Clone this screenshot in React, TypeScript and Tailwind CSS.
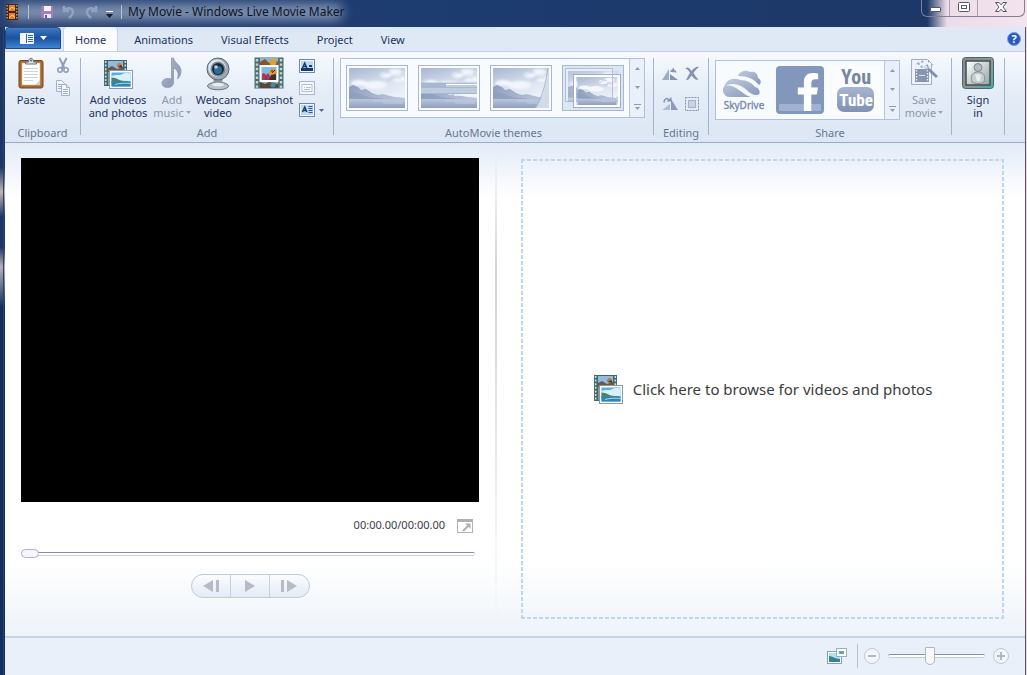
import React from 'react';
import { FaFacebookF } from 'react-icons/fa';

const tabs = ['Home', 'Animations', 'Visual Effects', 'Project', 'View'];

// Film strip with a landscape photo in front
const MediaIcon: React.FC<{ className?: string }> = ({ className }) => (
  <svg viewBox="0 0 30 30" className={className} aria-hidden="true">
    <rect x="1" y="1" width="23" height="26" fill="#41666c" />
    <path d="M2.700 2v24M22.300 2v9" stroke="#cfe0de" strokeWidth="1.600" strokeDasharray="2 1.600" />
    <rect x="5" y="2" width="15" height="10" fill="#8fbbe0" />
    <path d="M5 9l4-2 5 3 6-2v4H5z" fill="#6b5750" />
    <circle cx="16.500" cy="6.500" r="2.500" fill="#b9813f" />
    <path d="M15 8l3-2 2 3z" fill="#4a352b" />
    <rect x="5" y="13" width="2" height="13" fill="#7f9899" />
    <rect x="6.500" y="11.500" width="23" height="18" fill="#fff" stroke="#8c979f" />
    <rect x="8.500" y="13.500" width="19" height="14" fill="#58aee8" />
    <path d="M8.500 17c5-2 8 0 11-2s6 0 8-1v8h-19z" fill="#d9f0fb" />
    <path d="M8.500 18.500c5 0 8 3.500 13 3.500h3v2h-16z" fill="#4a8465" />
    <path d="M8.500 22.500h19v5h-19z" fill="#2f86b4" />
    <path d="M12 25.500c5-1.500 11-1.500 15.500-1" stroke="#9edceb" fill="none" />
  </svg>
);

const ClipboardIcon = () => (
  <svg viewBox="0 0 28 32" className="h-8 w-7" aria-hidden="true">
    <rect x="2" y="3.500" width="24" height="27.500" rx="2" fill="#a8682c" stroke="#7b471c" />
    <rect x="5" y="6" width="18" height="22" fill="#fdfdfd" stroke="#d8c5a8" strokeWidth=".6" />
    <path d="M7 11.500h14M7 14.500h14M7 17.500h14M7 20.500h14M7 23.500h9" stroke="#ccd3da" />
    <path d="M18 28l5-5v5z" fill="#c9cfd6" />
    <path d="M8.500 7V5h3c0-5 5-5 5 0h3v2z" fill="#d9e0e6" stroke="#6e7780" />
    <circle cx="14" cy="3.500" r="1" fill="#5d6670" />
  </svg>
);

const ScissorsIcon = () => (
  <svg viewBox="0 0 14 17" className="h-[17px] w-3.5" fill="none" stroke="#919eb8" aria-hidden="true">
    <path d="M3.500 1l5 10.500M10.500 1l-5 10.500" strokeWidth="2" />
    <circle cx="4" cy="13" r="2.200" strokeWidth="1.600" />
    <circle cx="10" cy="13" r="2.200" strokeWidth="1.600" />
  </svg>
);

const CopyIcon = () => (
  <svg viewBox="0 0 16 16" className="size-4" fill="#f0f4fb" stroke="#a3b0ca" aria-hidden="true">
    <path d="M1.500.5h5l3 3v8h-8z" />
    <path d="M3 4.500h4M3 6.500h4M3 8.500h3" />
    <path d="M6.500 4.500h5l3 3v8h-8z" />
    <path d="M11.500 4.500v3h3M8 9.500h5M8 11.500h5M8 13.500h5" />
  </svg>
);

const NoteIcon = () => (
  <svg viewBox="0 0 24 32" className="h-8 w-6" aria-hidden="true">
    <defs>
      <linearGradient id="note" x1="0" y1="0" x2="1" y2="1">
        <stop offset="0" stopColor="#b0b9c8" />
        <stop offset="1" stopColor="#8492ab" />
      </linearGradient>
    </defs>
    <path
      d="M11.500 1h2c1 5 7.500 7 7.500 13 0 3-1 5.500-3.500 8 1.500-5 .5-9-4-11v14.500c0 3-2.500 5-6 5S2 28.500 2 26s2.500-4.500 6-4.500c1.500 0 2.700.3 3.500.8z"
      fill="url(#note)"
      stroke="#8c99b0"
      strokeWidth=".8"
    />
  </svg>
);

const WebcamIcon = () => (
  <svg viewBox="0 0 26 34" className="h-[34px] w-[26px]" aria-hidden="true">
    <ellipse cx="13" cy="29" rx="10.500" ry="3.800" fill="#b9c2ca" stroke="#66717b" />
    <path d="M9 20h8l1 8H8z" fill="#8a959f" />
    <ellipse cx="13" cy="27.500" rx="6" ry="1.800" fill="#e8edf1" />
    <circle cx="13" cy="12" r="11" fill="#9ca8b3" stroke="#5d6973" />
    <circle cx="12" cy="11" r="8.800" fill="#dde4ea" />
    <circle cx="13" cy="12" r="7.500" fill="#7d8994" />
    <circle cx="13" cy="12" r="6" fill="#16293a" />
    <circle cx="13" cy="13" r="4" fill="#2f6c96" />
    <circle cx="11" cy="10" r="1.800" fill="#a9d3ec" />
  </svg>
);

const SnapshotIcon = () => (
  <svg viewBox="0 0 30 32" className="h-8 w-[30px]" aria-hidden="true">
    <rect x=".5" y=".5" width="29" height="31" fill="#4a6d70" />
    <path d="M3 2v29M27 2v29" stroke="#c5d5d3" strokeWidth="2.400" strokeDasharray="2.400 2" />
    <rect x="6" y="1" width="18" height="30" fill="#86b6d6" />
    <path d="M6 5l5-3 4 4 4-4 5 3v4H6z" fill="#8f5228" />
    <circle cx="19" cy="5" r="3.500" fill="#d9a338" />
    <path d="M6 25l5 2 4-2 9 2v4H6z" fill="#5b4733" />
    <circle cx="19" cy="28" r="2.500" fill="#3d8ab0" />
    <rect x="6.500" y="9" width="17" height="15" fill="#79bde6" stroke="#fff" strokeWidth="2" />
    <path d="M8 23v-6l2-1 2 2 2-2 2 3v4z" fill="#c22f4f" />
    <path d="M11 23v-4l2 1v3z" fill="#30539c" />
    <circle cx="19" cy="15" r="3.500" fill="#dd9a28" />
    <path d="M15 23l2-5 5-1v6z" fill="#4b2b1b" />
    <path d="M18 16l3-3M17 14h2" stroke="#382218" />
  </svg>
);

const CaptionIcon: React.FC<{ kind: 'title' | 'caption' | 'credits' }> = ({ kind }) => (
  <svg viewBox="0 0 16 14" className="h-3.5 w-4" aria-hidden="true">
    <rect x=".5" y=".5" width="15" height="13" fill="#f4f8fc" stroke={kind === 'caption' ? '#abb7cf' : '#7088ad'} />
    {kind === 'caption' ? (
      <path d="M3 3.500h10v7H3zM3 3.500h10M5 6.500h1M7 6.500h5M5 8.500h6" fill="#fff" stroke="#b3bed2" />
    ) : (
      <>
        <rect x="2" y="2" width="12" height="10" fill="#b9dcf4" />
        {kind === 'title' && <path d="M2 9h12v3H2z" fill="#163a70" />}
        <path d="M3.500 9l2.200-5 2.200 5M4.500 7.500h2.500" fill="none" stroke="#163a70" strokeWidth="1.400" />
        {kind === 'title' ? (
          <path d="M10 7h3" stroke="#163a70" strokeWidth="2" />
        ) : (
          <path d="M9.500 3.500h4M9.500 5.500h4M9.500 7.500h4M9.500 9.500h4" stroke="#315b99" />
        )}
      </>
    )}
  </svg>
);

const ThemeDefs = () => (
  <svg className="absolute size-0" aria-hidden="true">
    <defs>
      <linearGradient id="themeSky" x1="0" y1="0" x2=".4" y2="1">
        <stop offset="0" stopColor="#a9b6d2" />
        <stop offset=".6" stopColor="#dfe6f3" />
        <stop offset="1" stopColor="#f0f4fb" />
      </linearGradient>
      <linearGradient id="themeHill" x1="0" y1="0" x2="1" y2=".5">
        <stop offset="0" stopColor="#8e9dbd" />
        <stop offset="1" stopColor="#b7c3da" />
      </linearGradient>
      <linearGradient id="themeSea" x1="0" y1="0" x2="0" y2="1">
        <stop offset="0" stopColor="#b9c5dc" />
        <stop offset="1" stopColor="#8f9fc0" />
      </linearGradient>
      <filter id="themeSoft">
        <feGaussianBlur stdDeviation="1" />
      </filter>
    </defs>
  </svg>
);

// Washed-out landscape shared by all of the theme thumbnails
const Landscape = () => (
  <>
    <rect width="56" height="40" fill="url(#themeSky)" />
    <g fill="#f3f6fc" filter="url(#themeSoft)">
      <ellipse cx="10" cy="15" rx="8" ry="3" />
      <ellipse cx="26" cy="17" rx="12" ry="4" />
      <ellipse cx="37" cy="7" rx="6" ry="3" />
      <ellipse cx="46" cy="4" rx="7" ry="3" />
      <ellipse cx="50" cy="11" rx="7" ry="3" />
    </g>
    <path d="M32 8q4-5 10-3M38 13q6-5 14-3" fill="none" stroke="#b4c0d8" filter="url(#themeSoft)" />
    <path d="M0 19l4-2 5 2 3 3 5-1 6 4 6 2 5-1 7 2 5 1 10 1v4H0z" fill="url(#themeHill)" />
    <path d="M0 23l8 2 12 4 16 2H0z" fill="#8999ba" opacity=".6" />
    <path d="M0 31h56v9H0z" fill="url(#themeSea)" />
    <path d="M24 33h32M34 35h20" stroke="#d4dcea" strokeWidth=".6" />
  </>
);

const ThemeThumb: React.FC<{ kind: number }> = ({ kind }) => (
  <svg viewBox="0 0 62 46" className="h-[46px] w-[62px]" aria-hidden="true">
    <rect x=".5" y=".5" width="61" height="45" fill={kind === 3 ? '#dce5f2' : '#fafcff'} stroke="#a9b7d1" />
    {kind < 3 && (
      <svg x="3" y="3" width="56" height="40" viewBox="0 0 56 40">
        <Landscape />
      </svg>
    )}
    {kind === 1 && (
      <>
        <path d="M3 18h56v11H3z" fill="#bfcbdf" />
        <path d="M3 18h25v5H3z" fill="#a9b7d2" />
        <path d="M28 19.500h31" stroke="#fff" />
        <path d="M3 18h56M28 22.500h31M3 28.500h56" stroke="#a3b0ca" strokeWidth=".8" />
        <path d="M36 30h23" stroke="#f3f6fb" strokeWidth="1.500" />
      </>
    )}
    {kind === 2 && (
      <>
        <path d="M59 3c-2 14-5 28-13 40h13z" fill="#d2dbeb" />
        <path d="M58 3c-2 14-5 28-13 40" fill="none" stroke="#a9b6d0" />
      </>
    )}
    {kind === 3 && (
      <>
        <rect x="3.500" y="3.500" width="47" height="33" fill="#e6edf7" stroke="#b3c0d8" />
        <svg x="6" y="6" width="50" height="31" viewBox="0 0 56 36" preserveAspectRatio="none" opacity=".75">
          <Landscape />
        </svg>
        <rect x="11.500" y="9.500" width="47" height="33" fill="none" stroke="#9daccb" />
        <rect x="13" y="11" width="44" height="30" fill="none" stroke="#fff" strokeWidth="2" />
        <svg x="14" y="12" width="42" height="28" viewBox="0 0 56 40">
          <Landscape />
        </svg>
        <path d="M50.500 4v33" stroke="#b3c0d8" />
      </>
    )}
  </svg>
);

const editIcons = [
  {
    name: 'Rotate left',
    art: (
      <>
        <path d="M0 14h7V3z" fill="#a0acc3" />
        <path d="M8 14h8L8 8z" fill="#8593b0" />
        <path d="M9 5.500c2-2 4-1 5 1" fill="none" stroke="#8593b0" strokeWidth="1.500" />
        <path d="M8 5.500l4-4v5z" fill="#8593b0" />
      </>
    ),
  },
  {
    name: 'Remove',
    art: (
      <path
        d="M1 2.500c3-2 4.500-.5 6.500 2.500C10 2 12.500 0 15 1c-2 1.500-4 3.500-5.500 6 1.500 2.500 3 4.500 5 6.500-3 1-4.500-1-7-4-2 3-3 5-5.500 4.500C3.500 11 4.500 9 6 7 4.500 4.500 3.500 3 1 2.500z"
        fill="#8593b0"
      />
    ),
  },
  {
    name: 'Rotate right',
    art: (
      <>
        <path d="M9 14h7L9 3z" fill="#8f9cb7" />
        <path d="M0 14h8V8z" fill="#b0bbcf" />
        <path d="M2 6.500c0-4 3-5 5-2.500" fill="none" stroke="#8593b0" strokeWidth="1.500" />
        <path d="M4.500 5.500h5V1z" fill="#8593b0" />
      </>
    ),
  },
  {
    name: 'Select all',
    art: (
      <>
        <rect x="1.500" y="1.500" width="13" height="13" fill="none" stroke="#8492ac" strokeDasharray="2 1" />
        <rect x="4.500" y="4.500" width="7" height="7" fill="#c9d3e4" stroke="#a5b1c9" />
      </>
    ),
  },
];

const SkyDriveLogo = () => (
  <svg viewBox="0 0 48 48" className="size-12" role="img" aria-label="SkyDrive">
    <defs>
      <linearGradient id="cloud" x1="0" y1="0" x2="1" y2="1">
        <stop offset="0" stopColor="#c2cde0" />
        <stop offset="1" stopColor="#8496b7" />
      </linearGradient>
    </defs>
    <path d="M18 10c1-4 7-7 12-4 5-1 8 2 8 6 3 1 4 5 1 7-5-6-11-9-21-9z" fill="url(#cloud)" />
    <path d="M10 31c-7 0-9-8-5-12 1-5 9-8 15-5 7 0 12 3 15 7 5 0 7 9 1 10z" fill="url(#cloud)" />
    <path d="M5 20c11-5 18 1 24 6 5 4 10 4 14-1-3 7-10 8-17 4C18 24 13 18 5 20z" fill="#f4f7fc" />
    <text x="24" y="43" textAnchor="middle" fontSize="10" fill="#7486aa" stroke="#7486aa" strokeWidth=".3">SkyDrive</text>
  </svg>
);

const YouTubeLogo = () => (
  <svg viewBox="0 0 48 48" className="size-12" role="img" aria-label="YouTube" fontFamily="'Roboto Condensed', 'Liberation Sans Narrow', Roboto, sans-serif">
    <defs>
      <linearGradient id="tube" x1="0" y1="0" x2="0" y2="1">
        <stop offset="0" stopColor="#a8b5cf" />
        <stop offset="1" stopColor="#7f92b5" />
      </linearGradient>
    </defs>
    <rect width="48" height="48" fill="#fbfcfe" />
    <text x="24" y="18" textAnchor="middle" fontSize="20" fontWeight="700" fill="#75879f">You</text>
    <rect x="5" y="21" width="37" height="25" rx="7" fill="url(#tube)" />
    <text x="24" y="40" textAnchor="middle" fontSize="17" fontWeight="700" fill="#fff">Tube</text>
  </svg>
);

const SaveIcon = () => (
  <svg viewBox="0 0 28 30" className="h-[30px] w-7" aria-hidden="true">
    <path d="M1.500 2.500h16l4 4v21h-20z" fill="#eef3fa" stroke="#a0aec8" />
    <rect x="5" y="12" width="14" height="13" fill="#8795b1" />
    <path d="M6.500 13v12M17.500 13v12" stroke="#e7edf7" strokeDasharray="1.500 1.500" strokeWidth="1.300" />
    <path d="M9 18.500h6" stroke="#dde5f1" />
    <path d="M6 7l3-2 1 3zM12 3l2 2-3 1zM15 9l3-2 0 3zM10 10l2-2 1 3zM18 3l2 1-2 2z" fill="#97a5c0" />
    <path d="M15 9l12 11" stroke="#8090ac" strokeWidth="3" />
    <path d="M15 9l3 2.800" stroke="#e6ecf6" strokeWidth="2" />
    <path d="M17 12l2-3M21 10l2-3" stroke="#a9b5cb" />
  </svg>
);

const SignInIcon = () => (
  <svg viewBox="0 0 32 32" className="size-8" aria-hidden="true">
    <defs>
      <linearGradient id="frame" x1="0" y1="0" x2="1" y2="1">
        <stop offset="0" stopColor="#84898c" />
        <stop offset=".6" stopColor="#8d9899" />
        <stop offset="1" stopColor="#39b4a6" />
      </linearGradient>
      <linearGradient id="portrait" x1="0" y1="0" x2="1" y2="1">
        <stop offset="0" stopColor="#fff" />
        <stop offset="1" stopColor="#92a5a5" />
      </linearGradient>
    </defs>
    <rect x=".5" y=".5" width="31" height="31" rx="3" fill="url(#frame)" stroke="#52636a" />
    <rect x="4" y="4" width="24" height="24" fill="url(#portrait)" stroke="#474e50" strokeWidth="1.500" />
    <circle cx="16" cy="10.500" r="4" fill="#b4bdbf" stroke="#78888b" />
    <path d="M10 25c-2-7 1-10 6-10s8 3 6 10c-3 2-9 2-12 0z" fill="#c6cdcf" stroke="#819195" />
    <path d="M13 18c1-1 4-1 6 0l-1 6h-3z" fill="#e9eeee" />
  </svg>
);

const Caret: React.FC<{ className?: string }> = ({ className = 'text-[#536a91]' }) => (
  <svg viewBox="0 0 5 3" className={`inline-block h-[3px] w-[5px] ${className}`} aria-hidden="true">
    <path d="M0 0h5L2.500 3z" fill="currentColor" />
  </svg>
);

const Separator = () => <span className="mt-1.5 h-[77px] w-px shrink-0 bg-[#a5b4ca]" />;

const Group: React.FC<{ label?: string; className: string; children: React.ReactNode }> = ({ label, className, children }) => (
  <section aria-label={label} className={`flex shrink-0 flex-col ${className}`}>
    <div className="flex flex-1 items-start">{children}</div>
    <span className="h-[17px] text-center leading-[15px] text-[#68778f]">{label}</span>
  </section>
);

interface BigButtonProps {
  icon: React.ReactNode;
  lines: string[];
  className: string;
  muted?: boolean;
  menu?: boolean;
}

const BigButton: React.FC<BigButtonProps> = ({ icon, lines, className, muted, menu }) => (
  <button className={`flex shrink-0 flex-col items-center pt-[5px] leading-[13px] whitespace-nowrap ${muted ? 'text-[#8e97a8]' : 'text-[#1e3260]'} ${className}`}>
    <span className="flex h-9 items-start justify-center">{icon}</span>
    {lines.map((line, i) => (
      <span key={line} className="flex items-center gap-0.5">
        {line}
        {menu && i === lines.length - 1 && <Caret className="text-[#97a2b5]" />}
      </span>
    ))}
  </button>
);

// Up / down / expand column at the end of a gallery
const GalleryScroll = () => (
  <div className="flex w-[15px] flex-col border-l border-[#b9c6da] bg-[#e9f0f9] text-[#8c9bb5]">
    <button aria-label="Scroll up" className="flex flex-1 items-center justify-center">
      <Caret className="rotate-180" />
    </button>
    <button aria-label="Scroll down" className="flex flex-1 items-center justify-center">
      <Caret className="" />
    </button>
    <button aria-label="More" className="flex flex-1 flex-col items-center justify-center gap-0.5">
      <span className="h-px w-[7px] bg-current" />
      <Caret className="" />
    </button>
  </div>
);

const TitleBar = () => (
  <header className="relative flex h-[27px] items-start bg-linear-to-r from-[#263f6e] via-[#1d3c70] via-40% to-[#1b3766] text-[12px] text-[#0c1424]">
    <div className="absolute inset-y-0 right-0 w-[100px] bg-linear-to-r from-transparent via-[#eddcea] via-20% to-[#f3e4ee]" />
    <div className="absolute top-1 left-2 h-4 w-[335px] rounded-full bg-[#8395b3] blur-[6px]" />
    <div className="relative flex h-6 items-center pl-1.5">
      <svg viewBox="0 0 12 16" className="h-4 w-3" aria-hidden="true">
        <rect width="12" height="16" fill="#3b2a24" />
        <path d="M1.200 1v15M10.800 1v15" stroke="#dcb589" strokeDasharray="1.500 1.500" strokeWidth="1.200" />
        <path d="M3 1h6v6H3zM3 9h6v6H3z" fill="#f07b25" />
        <path d="M3 6l3-3 3 2M3 14l3-3 3 2" stroke="#ffd568" fill="none" />
      </svg>
      <span className="ml-2.5 h-3.5 w-px bg-[#b4c0d4]" />
      <button aria-label="Save" className="ml-3">
        <svg viewBox="0 0 13 12" className="h-3 w-[13px]" aria-hidden="true">
          <path d="M0 0h12v12H1L0 11z" fill="#a07fbe" />
          <path d="M3 0h7v5H3z" fill="#f7effc" />
          <path d="M3 8h7v4H3z" fill="#efe5f6" />
          <path d="M4 9h2v3H4z" fill="#75569b" />
        </svg>
      </button>
      <button aria-label="Undo" className="ml-2">
        <svg viewBox="0 0 14 14" className="size-3.5" fill="none" stroke="#8fa2c2" strokeWidth="2.500" aria-hidden="true">
          <path d="M2 1v5h5M2.500 5.500C5 2 11 3 11 7c0 3-2 4-4 6" />
        </svg>
      </button>
      <button aria-label="Redo" className="ml-2">
        <svg viewBox="0 0 14 14" className="size-3.5" fill="none" stroke="#8fa2c2" strokeWidth="2.500" aria-hidden="true">
          <path d="M12 1v5H7M11.500 5.500C9 2 3 3 3 7c0 3 2 4 4 6" />
        </svg>
      </button>
      <button aria-label="Customize Quick Access Toolbar" className="ml-2 flex flex-col items-center gap-0.5 pt-1">
        <span className="h-px w-[7px] bg-white" />
        <svg viewBox="0 0 7 4" className="h-1 w-[7px]" aria-hidden="true">
          <path d="M0 0h7L3.500 4z" fill="#111a2c" />
        </svg>
      </button>
      <span className="ml-2 h-3.5 w-px bg-[#b4c0d4]" />
      <h1 className="ml-1.5 whitespace-nowrap">My Movie - Windows Live Movie Maker</h1>
    </div>
    <div className="relative mr-0.5 ml-auto flex h-[17px] rounded-b-md border border-t-0 border-[#857f92] text-[#535764]">
      <button aria-label="Minimize" className="flex w-7 items-start justify-center border-r border-[#aaa2b2] pt-[7px]">
        <span className="h-[5px] w-[11px] rounded-[1px] border border-current bg-white" />
      </button>
      <button aria-label="Maximize" className="flex w-7 items-start justify-center border-r border-[#aaa2b2] pt-0.5">
        <svg viewBox="0 0 12 10" className="h-2.5 w-3" fill="#fff" stroke="currentColor" aria-hidden="true">
          <rect x=".5" y=".5" width="11" height="9" rx="1" />
          <rect x="3.500" y="3.500" width="5" height="3" />
        </svg>
      </button>
      <button aria-label="Close" className="flex w-[46px] items-start justify-center pt-0.5">
        <svg viewBox="0 0 12 10" className="h-2.5 w-3" fill="#fff" stroke="currentColor" aria-hidden="true">
          <path d="M.5.500h3.500L6 2.800 8 .5h3.500L8 5l3.500 4.500H8L6 7.200 4 9.500H.5L4 5z" />
        </svg>
      </button>
    </div>
  </header>
);

const TabBar = () => (
  <nav className="flex h-6 items-end bg-[#dfe9f5] text-[#1e3260]">
    <button aria-label="File menu" className="flex h-[22px] w-14 items-center justify-center gap-1.5 self-start rounded-t-sm border border-[#1a4a93] bg-linear-to-b from-[#3e79c1] via-[#1c52a2] via-50% to-[#3d85d2]">
      <svg viewBox="0 0 14 11" className="h-[11px] w-3.5" aria-hidden="true">
        <rect width="14" height="11" rx="1" fill="#f3f8fd" />
        <path d="M6.500 1v9" stroke="#2962ad" />
        <path d="M8 2.500h5M8 4.500h5M8 6.500h5M8 8.500h5" stroke="#2962ad" />
      </svg>
      <svg viewBox="0 0 7 4" className="h-1 w-[7px]" aria-hidden="true">
        <path d="M0 0h7L3.500 4z" fill="#fff" />
      </svg>
    </button>
    <div role="tablist" className="ml-0.5 flex h-full gap-1">
      {tabs.map((tab) => (
        <button
          key={tab}
          role="tab"
          aria-selected={tab === 'Home'}
          className={`border-x px-[11px] pt-0.5 whitespace-nowrap ${tab === 'Home' ? 'rounded-t-sm border-[#c3d2e6] bg-[#fafcfe]' : 'border-transparent'}`}
        >
          {tab}
        </button>
      ))}
    </div>
    <button aria-label="Help" className="mr-1 ml-auto self-center">
      <svg viewBox="0 0 14 14" className="size-3.5" aria-hidden="true">
        <circle cx="7" cy="7" r="6.500" fill="#2559c4" stroke="#7d9ed8" />
        <text x="7" y="11" textAnchor="middle" fontSize="11" fontWeight="700" fill="#fff">?</text>
      </svg>
    </button>
  </nav>
);

const Ribbon = () => (
  <div className="relative flex h-[92px] overflow-hidden border-t border-b border-t-[#c3cfe0] border-b-[#9aadc6] bg-linear-to-b from-[#f6fafe] via-[#e4ecf7] via-45% to-[#dce6f4]">
    <ThemeDefs />
    <Group label="Clipboard" className="w-[75px]">
      <BigButton className="ml-2 w-9" icon={<ClipboardIcon />} lines={['Paste']} />
      <div className="ml-1.5 flex flex-col items-center gap-1.5 pt-[5px]">
        <button aria-label="Cut">
          <ScissorsIcon />
        </button>
        <button aria-label="Copy">
          <CopyIcon />
        </button>
      </div>
    </Group>
    <Separator />
    <Group label="Add" className="w-[252px]">
      <BigButton className="ml-[7px] w-[60px]" icon={<MediaIcon className="mt-0.5 size-[30px]" />} lines={['Add videos', 'and photos']} />
      <BigButton className="ml-px w-[46px]" icon={<NoteIcon />} lines={['Add', 'music']} muted menu />
      <BigButton className="w-[46px]" icon={<WebcamIcon />} lines={['Webcam', 'video']} />
      <BigButton className="w-14" icon={<SnapshotIcon />} lines={['Snapshot']} />
      <div className="ml-0.5 flex flex-col items-start gap-2 pt-[7px]">
        <button aria-label="Title">
          <CaptionIcon kind="title" />
        </button>
        <button aria-label="Caption">
          <CaptionIcon kind="caption" />
        </button>
        <button aria-label="Credits" className="flex items-center gap-1">
          <CaptionIcon kind="credits" />
          <Caret />
        </button>
      </div>
    </Group>
    <Separator />
    <Group label="AutoMovie themes" className="w-[319px]">
      <div className="mt-1.5 ml-1.5 flex h-[60px] border border-[#b2c0d7] bg-[#f8fbfe]">
        <div className="flex items-center gap-2.5 px-[5px]">
          {['Default', 'Contemporary', 'Cinematic', 'Fade'].map((theme, i) => (
            <button key={theme} aria-label={theme}>
              <ThemeThumb kind={i} />
            </button>
          ))}
        </div>
        <GalleryScroll />
      </div>
    </Group>
    <Separator />
    <Group label="Editing" className="w-[54px]">
      <div className="grid grid-cols-2 gap-x-1.5 gap-y-3.5 pt-3.5 pl-2">
        {editIcons.map(({ name, art }) => (
          <button key={name} aria-label={name}>
            <svg viewBox="0 0 16 16" className="size-4" aria-hidden="true">
              {art}
            </svg>
          </button>
        ))}
      </div>
    </Group>
    <Separator />
    <Group label="Share" className="w-[242px]">
      <div className="mt-2 ml-1.5 flex h-[60px] border border-[#b2c0d7] bg-[#f8fbfe]">
        <div className="flex items-center gap-2 px-1">
          <button>
            <SkyDriveLogo />
          </button>
          <button aria-label="Facebook" className="relative flex size-12 items-end justify-center rounded-sm bg-[#8397bc] pb-[3px]">
            <span className="absolute inset-x-[3px] bottom-[3px] h-[7px] bg-[#a1b1cf]" />
            <FaFacebookF className="relative ml-4 size-[38px] text-white" />
          </button>
          <button>
            <YouTubeLogo />
          </button>
        </div>
        <GalleryScroll />
      </div>
      <BigButton className="w-12" icon={<SaveIcon />} lines={['Save', 'movie']} muted menu />
    </Group>
    <Separator />
    <Group className="w-[52px]">
      <BigButton className="w-full" icon={<SignInIcon />} lines={['Sign', 'in']} />
    </Group>
    <Separator />
  </div>
);

const Preview = () => (
  <section aria-label="Preview" className="pt-[15px] pr-[18px] pl-4">
    <div className="aspect-[4/3] w-full bg-black" />
    <div className="mt-[17px] flex h-3.5 items-center justify-end gap-3 pr-1.5 text-[11px] text-[#3c3c44]">
      <span>00:00.00/00:00.00</span>
      <button aria-label="Full screen">
        <svg viewBox="0 0 16 14" className="h-3.5 w-4" fill="none" stroke="#b0b0b4" aria-hidden="true">
          <rect x=".5" y=".5" width="15" height="13" />
          <path d="M0 1.500h16" strokeWidth="3" />
          <path d="M6 12l6-6" strokeWidth="2" />
          <path d="M8 4.500h5.500V10z" fill="#b0b0b4" stroke="none" />
        </svg>
      </button>
    </div>
    <div className="mt-[13px] flex h-4 items-center pr-1">
      <input
        type="range"
        aria-label="Seek"
        defaultValue={0}
        className="h-1 w-full appearance-none rounded-full border-y border-t-[#8c8ca6] border-b-[#cfcfdb] bg-white [&::-webkit-slider-thumb]:h-[9px] [&::-webkit-slider-thumb]:w-[18px] [&::-webkit-slider-thumb]:appearance-none [&::-webkit-slider-thumb]:rounded-full [&::-webkit-slider-thumb]:border [&::-webkit-slider-thumb]:border-[#b3b3c4] [&::-webkit-slider-thumb]:bg-[#f5f6fb]"
      />
    </div>
    <div className="mx-auto mt-3 flex h-6 w-[119px] divide-x divide-[#c7d0dd] overflow-hidden rounded-full border border-[#c2cad6] bg-linear-to-b from-[#fbfcfe] to-[#e3ebf5]">
      <button aria-label="Previous frame" className="flex flex-1 items-center justify-center">
        <svg viewBox="0 0 16 12" className="h-3 w-4" fill="#b6bbc4" aria-hidden="true">
          <path d="M10 0v12L0 6zM13 0h3v12h-3z" />
        </svg>
      </button>
      <button aria-label="Play" className="flex flex-1 items-center justify-center">
        <svg viewBox="0 0 10 12" className="h-3 w-2.5" fill="#b6bbc4" aria-hidden="true">
          <path d="M0 0v12l10-6z" />
        </svg>
      </button>
      <button aria-label="Next frame" className="flex flex-1 items-center justify-center">
        <svg viewBox="0 0 16 12" className="h-3 w-4" fill="#b6bbc4" aria-hidden="true">
          <path d="M6 0v12l10-6zM0 0h3v12H0z" />
        </svg>
      </button>
    </div>
  </section>
);

const Storyboard = () => (
  <section aria-label="Storyboard" className="relative flex pt-4 pr-[21px] pb-[17px] pl-6">
    <span className="absolute inset-y-2 right-full w-0.5 bg-linear-to-b from-transparent via-[#d0d2d6] via-25% to-transparent" />
    <button className="relative flex flex-1 items-center justify-center gap-2.5 text-[15px] text-[#3b3b3b]">
      <span className="absolute inset-x-0 top-0 h-0.5 bg-[repeating-linear-gradient(90deg,#bdd7ee_0_4px,transparent_4px_6px)]" />
      <span className="absolute inset-x-0 bottom-0 h-0.5 bg-[repeating-linear-gradient(90deg,#bdd7ee_0_4px,transparent_4px_6px)]" />
      <span className="absolute inset-y-0 left-0 w-0.5 bg-[repeating-linear-gradient(180deg,#bdd7ee_0_4px,transparent_4px_6px)]" />
      <span className="absolute inset-y-0 right-0 w-0.5 bg-[repeating-linear-gradient(180deg,#bdd7ee_0_4px,transparent_4px_6px)]" />
      <MediaIcon className="size-[30px]" />
      Click here to browse for videos and photos
    </button>
  </section>
);

const StatusBar = () => (
  <footer className="flex h-[39px] items-center justify-end border-t-2 border-[#c6d4e3] bg-[#e9f0f9] pr-4 pb-0.5">
    <button aria-label="Thumbnail size" className="mr-2.5">
      <svg viewBox="0 0 20 18" className="h-[18px] w-5" aria-hidden="true">
        <rect x=".5" y="4.500" width="14" height="12" fill="#fff" stroke="#8ba0b8" />
        <rect x="2" y="6" width="11" height="9" fill="#b7e1f1" />
        <path d="M2 9c4 0 6 3 11 3v3H2z" fill="#3b8196" />
        <rect x="9.500" y="1.500" width="10" height="8" fill="#fff" stroke="#9badc2" />
        <rect x="12" y="4" width="5" height="3" fill="#5ba6bd" />
      </svg>
    </button>
    <span className="mr-1.5 h-6 w-px bg-[#b5c2d3]" />
    <button aria-label="Zoom out">
      <svg viewBox="0 0 16 16" className="size-4" fill="#f2f6fb" stroke="#c0c7d2" aria-hidden="true">
        <circle cx="8" cy="8" r="7.500" />
        <path d="M4 8h8" stroke="#b0b8c5" strokeWidth="2" />
      </svg>
    </button>
    <input
      type="range"
      aria-label="Zoom"
      defaultValue={42}
      className="mx-2 h-1 w-[97px] appearance-none rounded-full border-y border-t-[#8490a4] border-b-[#c3ccd9] bg-white [&::-webkit-slider-thumb]:h-[18px] [&::-webkit-slider-thumb]:w-2.5 [&::-webkit-slider-thumb]:appearance-none [&::-webkit-slider-thumb]:rounded-t-xs [&::-webkit-slider-thumb]:rounded-b-full [&::-webkit-slider-thumb]:border [&::-webkit-slider-thumb]:border-[#b0b4bd] [&::-webkit-slider-thumb]:bg-[#fafafc]"
    />
    <button aria-label="Zoom in">
      <svg viewBox="0 0 16 16" className="size-4" fill="#f2f6fb" stroke="#c0c7d2" aria-hidden="true">
        <circle cx="8" cy="8" r="7.500" />
        <path d="M4 8h8M8 4v8" stroke="#b0b8c5" strokeWidth="2" />
      </svg>
    </button>
  </footer>
);

export default function App() {
  return (
    <div className="flex min-h-screen flex-col bg-[#1a3768] font-['Noto_Sans','Open_Sans',sans-serif] text-[11px]">
      <TitleBar />
      <div className="flex flex-1 bg-[linear-gradient(180deg,#1a3768_0,#1a3768_140px,#c0b5b4_165px,#1a3768_190px,#1a3768_220px,#b7b1b8_240px,#12305f_280px)]">
        <div className="ml-[3px] flex min-w-0 flex-1 flex-col border-l border-[#33405f] pl-px">
          <TabBar />
          <Ribbon />
          <main className="grid flex-1 grid-cols-[41fr_44fr] bg-[linear-gradient(180deg,#e3ebf8_0,#fff_55px,#fff_calc(100%-75px),#eef3fa_100%)]">
            <Preview />
            <Storyboard />
          </main>
          <StatusBar />
        </div>
        <span className="w-0.5 border-l border-[#5a5468] bg-[#ead9e4]" />
      </div>
    </div>
  );
}
